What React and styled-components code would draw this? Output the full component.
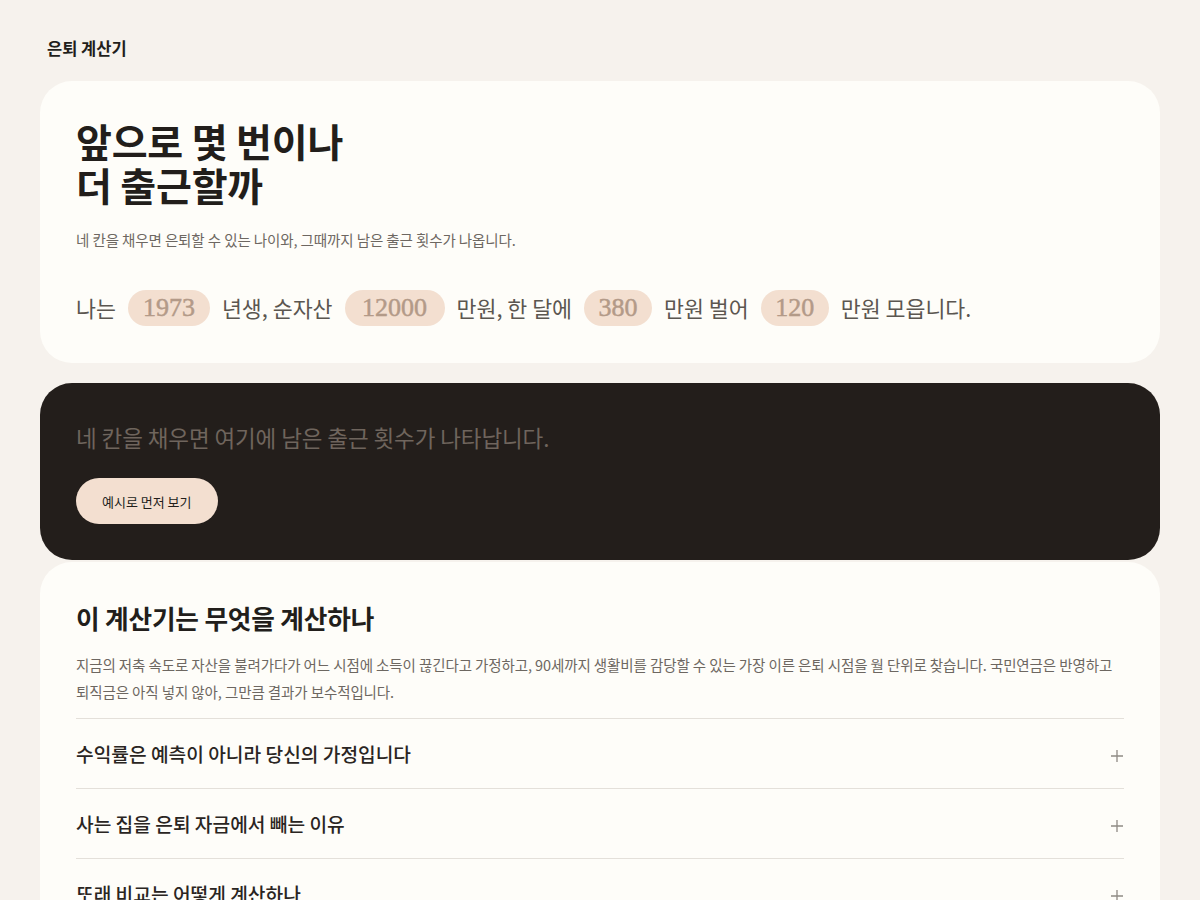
import styled, { createGlobalStyle } from "styled-components";

const GlobalStyle = createGlobalStyle`
  * { box-sizing: border-box; }
  body {
    margin: 0;
    background: #f6f2ed;
    font-family: "Noto Sans CJK KR", "Noto Sans", sans-serif;
    color: #221e1b;
  }
`;

const Page = styled.div`
  width: 1120px;
  margin: 0 auto;
  padding: 36px 0 40px;
`;

const Brand = styled.div`
  padding-left: 7px;
  font-size: 16.5px;
  font-weight: 700;
  line-height: 24px;
  margin-bottom: 21px;
`;

const Card = styled.section`
  background: ${({ dark }) => (dark ? "#231e1b" : "#fefdf9")};
  border-radius: 32px;
  padding: ${({ pad }) => pad || "40px 36px 36px"};
  margin-bottom: ${({ gap }) => gap || "20px"};
`;

const Title = styled.h1`
  margin: 0;
  font-size: 39px;
  line-height: 44px;
  font-weight: 700;
  letter-spacing: -0.2px;
  color: #221e1b;
`;

const Lead = styled.p`
  margin: 23px 0 0;
  font-size: 14.5px;
  line-height: 22px;
  letter-spacing: -0.1px;
  color: #6d6761;
`;

const Sentence = styled.div`
  margin-top: 39px;
  display: flex;
  align-items: center;
  flex-wrap: wrap;
  gap: 12px;
  font-size: 21.7px;
  line-height: 36px;
  color: #5b5650;
`;

const Pill = styled.input`
  width: ${({ w }) => w}px;
  height: 36px;
  border: none;
  border-radius: 18px;
  background: #f3dfd0;
  text-align: center;
  font-family: "Liberation Serif", "DejaVu Serif", serif;
  font-size: 26px;
  font-weight: 400;
  -webkit-text-stroke: 0.5px #b39a88;
  color: #5b4a3e;
  outline: none;
  padding: 0;
  &::placeholder {
    color: #b39a88;
  }
`;

const Result = styled.p`
  margin: 0;
  font-size: 22.5px;
  line-height: 32px;
  letter-spacing: -0.1px;
  color: #6f655d;
`;

const ExampleButton = styled.button`
  margin-top: 25px;
  height: 46px;
  padding: 0 26px;
  border: none;
  border-radius: 23px;
  background: #f3dfd0;
  color: #221e1b;
  font-family: inherit;
  font-size: 13px;
  cursor: pointer;
`;

const SectionTitle = styled.h2`
  margin: 0;
  font-size: 25.7px;
  line-height: 34px;
  font-weight: 700;
  letter-spacing: -0.2px;
  color: #221e1b;
`;

const Body = styled.p`
  margin: 16px 0 0;
  font-size: 14.5px;
  line-height: 27px;
  letter-spacing: -0.1px;
  color: #6d6761;
  padding-bottom: 13px;
  border-bottom: 1px solid #e4e0da;
`;

const Row = styled.div`
  height: 70px;
  display: flex;
  align-items: center;
  justify-content: space-between;
  border-bottom: 1px solid #e4e0da;
  cursor: pointer;
`;

const RowTitle = styled.span`
  font-size: 19.2px;
  font-weight: 500;
  color: #2a2522;
`;

const PlusIcon = styled.svg`
  flex: none;
  margin-top: 4px;
`;

const Plus = () => (
  <PlusIcon width="14" height="14" viewBox="0 0 14 14">
    <path d="M7 1v12M1 7h12" stroke="#8f8a84" strokeWidth="1.3" fill="none" />
  </PlusIcon>
);

const faqs = [
  "수익률은 예측이 아니라 당신의 가정입니다",
  "사는 집을 은퇴 자금에서 빼는 이유",
  "또래 비교는 어떻게 계산하나",
  "계산 결과를 어떻게 읽으면 되나",
];

const App = () => {
  return (
    <>
      <GlobalStyle />
      <Page>
        <Brand>은퇴 계산기</Brand>
        <Card pad="37px 36px 37px">
          <Title>
            앞으로 몇 번이나
            <br />더 출근할까
          </Title>
          <Lead>네 칸을 채우면 은퇴할 수 있는 나이와, 그때까지 남은 출근 횟수가 나옵니다.</Lead>
          <Sentence>
            <span>나는</span>
            <Pill w={82} placeholder="1973" inputMode="numeric" />
            <span>년생, 순자산</span>
            <Pill w={100} placeholder="12000" inputMode="numeric" />
            <span>만원, 한 달에</span>
            <Pill w={68} placeholder="380" inputMode="numeric" />
            <span>만원 벌어</span>
            <Pill w={68} placeholder="120" inputMode="numeric" />
            <span>만원 모읍니다.</span>
          </Sentence>
        </Card>
        <Card dark pad="38px 36px 36px" gap="2px">
          <Result>네 칸을 채우면 여기에 남은 출근 횟수가 나타납니다.</Result>
          <ExampleButton>예시로 먼저 보기</ExampleButton>
        </Card>
        <Card pad="39px 36px 24px">
          <SectionTitle>이 계산기는 무엇을 계산하나</SectionTitle>
          <Body>
            지금의 저축 속도로 자산을 불려가다가 어느 시점에 소득이 끊긴다고 가정하고, 90세까지 생활비를 감당할 수 있는
            가장 이른 은퇴 시점을 월 단위로 찾습니다. 국민연금은 반영하고 퇴직금은 아직 넣지 않아, 그만큼 결과가
            보수적입니다.
          </Body>
          {faqs.map((q) => (
            <Row key={q}>
              <RowTitle>{q}</RowTitle>
              <Plus />
            </Row>
          ))}
        </Card>
      </Page>
    </>
  );
};

export default App;
